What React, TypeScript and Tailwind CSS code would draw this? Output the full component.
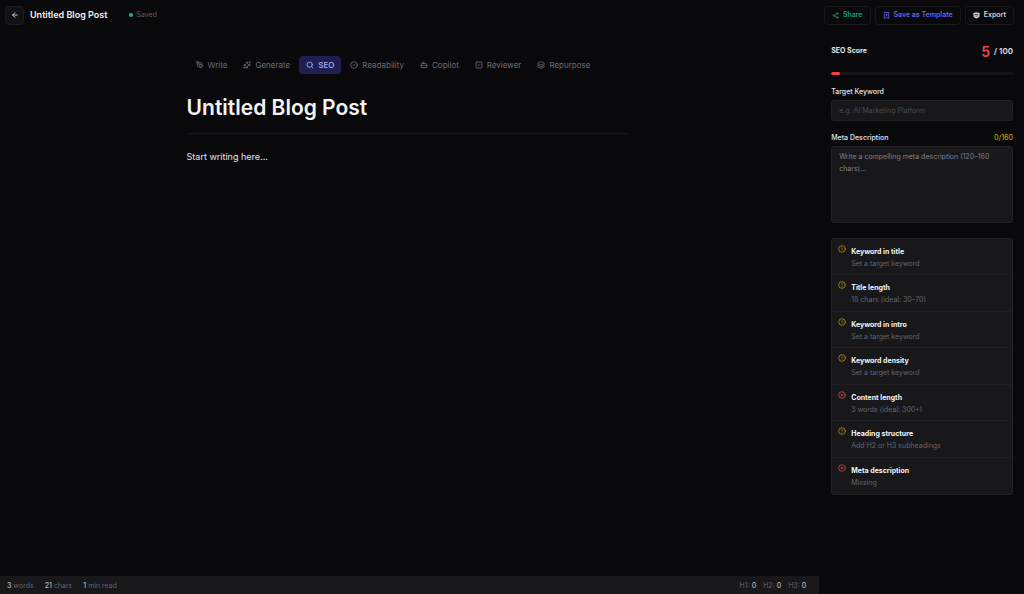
import {
  ArrowLeft,
  Bot,
  CircleAlert,
  CircleCheck,
  CircleX,
  Layers,
  PenTool,
  Search,
  Share2,
  Sparkles,
  SquareCheck,
} from "lucide-react";

const tabs = [
  { label: "Write", icon: PenTool },
  { label: "Generate", icon: Sparkles },
  { label: "SEO", icon: Search },
  { label: "Readability", icon: CircleCheck },
  { label: "Copilot", icon: Bot },
  { label: "Reviewer", icon: SquareCheck },
  { label: "Repurpose", icon: Layers },
];

const checks = [
  { title: "Keyword in title", note: "Set a target keyword", status: "warn" },
  { title: "Title length", note: "18 chars (ideal: 30–70)", status: "warn" },
  { title: "Keyword in intro", note: "Set a target keyword", status: "warn" },
  { title: "Keyword density", note: "Set a target keyword", status: "warn" },
  { title: "Content length", note: "3 words (ideal: 300+)", status: "fail" },
  { title: "Heading structure", note: "Add H2 or H3 subheadings", status: "warn" },
  { title: "Meta description", note: "Missing", status: "fail" },
];

function TemplateIcon() {
  return (
    <svg width="7" height="7" viewBox="0 0 14 14" fill="none" stroke="currentColor" strokeWidth="1.6">
      <path d="M2.5 1h9v12L7 10.5 2.5 13z" />
      <path d="M7 3.5v5M5 6h4" />
    </svg>
  );
}

function ExportIcon() {
  return (
    <svg width="7" height="7" viewBox="0 0 14 14" fill="currentColor">
      <path d="M1 2.5C1 1.5 3 1 7 1s6 .5 6 1.500V8c0 2.5-3 4-6 5-3-1-6-2.5-6-5z" />
      <path d="M3 5.2h8M5 8.2h4" stroke="#09090b" strokeWidth="1.4" />
    </svg>
  );
}

function Header() {
  const button = "flex h-[19px] items-center gap-1 rounded border border-[#18181b] px-[7px] text-[7px] font-semibold";
  return (
    <header className="flex h-[30px] items-center justify-between pl-[5px] pr-[10px]">
      <div className="flex items-center">
        <button
          type="button"
          aria-label="Back"
          className="flex size-[19px] items-center justify-center rounded border border-[#1c1c1f] bg-[#121214] text-[#e4e4e7]"
        >
          <ArrowLeft size={8} strokeWidth={2.5} />
        </button>
        <span className="ml-[6px] text-[9px] font-semibold text-[#f4f4f5]">Untitled Blog Post</span>
        <span className="ml-[22px] flex items-center gap-[3px] text-[7px] text-[#5d5d66]">
          <span className="size-1 rounded-full bg-[#10b981]" />
          Saved
        </span>
      </div>
      <div className="flex items-center gap-1">
        <button type="button" className={`${button} text-[#10a36f]`}>
          <Share2 size={7} strokeWidth={2.5} />
          Share
        </button>
        <button type="button" className={`${button} text-[#6366e0]`}>
          <TemplateIcon />
          Save as Template
        </button>
        <button type="button" className={`${button} text-[#d4d4d8]`}>
          <ExportIcon />
          Export
        </button>
      </div>
    </header>
  );
}

function Editor() {
  return (
    <main className="flex min-w-0 flex-1 flex-col">
      <div className="flex-1 pt-[26px] pr-[4px]">
        <div className="mx-auto max-w-[442px]">
          <nav className="flex items-center gap-[2px] pl-[2px]">
            {tabs.map(({ label, icon: Icon }) => (
              <button
                key={label}
                type="button"
                className={`flex h-[18px] items-center gap-1 rounded px-[7px] text-[8px] ${
                  label === "SEO" ? "bg-[#211f52] font-medium text-[#a5b4fc]" : "text-[#6b6b73]"
                }`}
              >
                <Icon size={8} strokeWidth={2.5} />
                {label}
              </button>
            ))}
          </nav>
          <h1 className="mt-[19px] border-b border-[#151518] pb-[11px] text-[21px] leading-[29px] font-semibold text-[#f4f4f5]">
            Untitled Blog Post
          </h1>
          <p className="mt-[16px] text-[9px] leading-[14px] text-[#e4e4e7]">Start writing here...</p>
        </div>
      </div>
      <footer className="flex h-[18px] items-center justify-between bg-[#18181a] pt-[2px] pl-[7px] pr-[13px] text-[7px] text-[#63636b]">
        <div className="flex gap-[11px]">
          <span><b className="font-medium text-[#b4b4bb]">3</b> words</span>
          <span><b className="font-medium text-[#b4b4bb]">21</b> chars</span>
          <span><b className="font-medium text-[#b4b4bb]">1</b> min read</span>
        </div>
        <div className="flex gap-[7px]">
          <span>H1: <b className="font-medium text-[#b4b4bb]">0</b></span>
          <span>H2: <b className="font-medium text-[#b4b4bb]">0</b></span>
          <span>H3: <b className="font-medium text-[#b4b4bb]">0</b></span>
        </div>
      </footer>
    </main>
  );
}

function SeoPanel() {
  return (
    <aside className="w-1/5 shrink-0 pl-[12px] pr-[11px] pt-[11px]">
      <div className="flex h-[20px] items-center justify-between text-[#e4e4e7]">
        <h2 className="text-[7px] leading-[10px] font-bold">SEO Score</h2>
        <div className="flex items-center gap-1 text-[8px] font-semibold">
          <span className="text-[14px] text-[#ef4444]">5</span>
          <span>/ 100</span>
        </div>
      </div>
      <div className="mt-[11px] h-[3px] overflow-hidden rounded-full bg-[#161618]">
        <div className="h-full w-[5%] rounded-full bg-[#ef4444]" />
      </div>

      <label htmlFor="keyword" className="mt-[12px] block text-[7px] leading-[10px] font-medium text-[#e4e4e7]">
        Target Keyword
      </label>
      <input
        id="keyword"
        placeholder="e.g. AI Marketing Platform"
        className="mt-[3px] block h-[21px] w-full rounded-[3px] border border-[#222225] bg-[#18181b] px-[7px] text-[7px] text-[#e4e4e7] placeholder:text-[#4b4b52]"
      />

      <div className="mt-[12px] flex justify-between text-[7px] leading-[10px] font-medium">
        <label htmlFor="meta" className="text-[#e4e4e7]">Meta Description</label>
        <span className="text-[#ca9a08]">0/160</span>
      </div>
      <textarea
        id="meta"
        placeholder="Write a compelling meta description (120–160 chars)..."
        className="mt-[3px] block h-[77px] w-full resize-none rounded-[3px] border border-[#222225] bg-[#18181b] px-[7px] py-[4px] text-[7px] leading-[12px] text-[#e4e4e7] placeholder:text-[#80808a]"
      />

      <ul className="mt-[15px] grid min-h-[257px] auto-rows-fr divide-y divide-[#1f1f23] rounded-[3px] border border-[#222225] bg-[#18181b]">
        {checks.map((check) => (
          <li key={check.title} className="flex gap-[5px] pl-[6px] pt-[6px]">
            {check.status === "warn" ? (
              <CircleAlert size={8} className="shrink-0 text-[#d9a406]" />
            ) : (
              <CircleX size={8} className="shrink-0 text-[#e0525c]" />
            )}
            <div className="pt-px">
              <p className="text-[7px] leading-[12px] font-bold text-[#f4f4f5]">{check.title}</p>
              <p className="text-[7px] leading-[12px] text-[#63636b]">{check.note}</p>
            </div>
          </li>
        ))}
      </ul>
    </aside>
  );
}

export default function App() {
  return (
    <div className="flex min-h-screen flex-col bg-[#09090b] font-['Inter',sans-serif]">
      <Header />
      <div className="flex flex-1">
        <Editor />
        <SeoPanel />
      </div>
    </div>
  );
}
